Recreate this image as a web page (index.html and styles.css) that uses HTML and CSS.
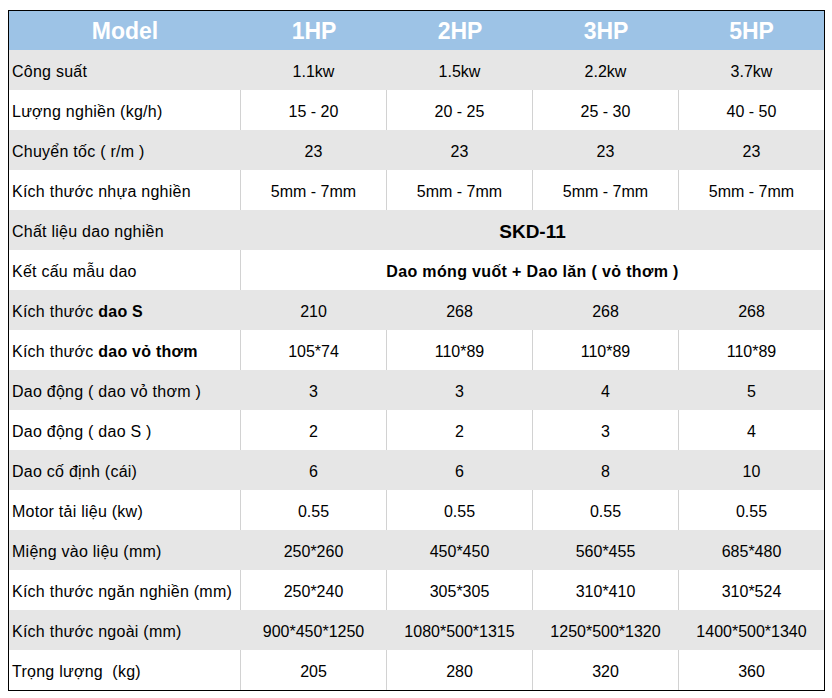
FILE: index.html
```html
<!DOCTYPE html>
<html lang="vi">
<head>
<meta charset="utf-8">
<title>Thông số kỹ thuật</title>
<link rel="stylesheet" href="styles.css">
</head>
<body>
<div class="spec">
  <div class="row head">
    <div class="cell">Model</div><div class="cell">1HP</div><div class="cell">2HP</div><div class="cell">3HP</div><div class="cell">5HP</div>
  </div>
  <div class="row grey">
    <div class="cell label">Công suất</div><div class="cell">1.1kw</div><div class="cell">1.5kw</div><div class="cell">2.2kw</div><div class="cell">3.7kw</div>
  </div>
  <div class="row">
    <div class="cell label">Lượng nghiền (kg/h)</div><div class="cell">15 - 20</div><div class="cell">20 - 25</div><div class="cell">25 - 30</div><div class="cell">40 - 50</div>
  </div>
  <div class="row grey">
    <div class="cell label">Chuyển tốc ( r/m )</div><div class="cell">23</div><div class="cell">23</div><div class="cell">23</div><div class="cell">23</div>
  </div>
  <div class="row">
    <div class="cell label">Kích thước nhựa nghiền</div><div class="cell">5mm - 7mm</div><div class="cell">5mm - 7mm</div><div class="cell">5mm - 7mm</div><div class="cell">5mm - 7mm</div>
  </div>
  <div class="row grey">
    <div class="cell label">Chất liệu dao nghiền</div><div class="cell wide big">SKD-11</div>
  </div>
  <div class="row">
    <div class="cell label">Kết cấu mẫu dao</div><div class="cell wide strong">Dao móng vuốt + Dao lăn ( vỏ thơm )</div>
  </div>
  <div class="row grey">
    <div class="cell label">Kích thước&nbsp;<b>dao S</b></div><div class="cell">210</div><div class="cell">268</div><div class="cell">268</div><div class="cell">268</div>
  </div>
  <div class="row">
    <div class="cell label">Kích thước&nbsp;<b>dao vỏ thơm</b></div><div class="cell">105*74</div><div class="cell">110*89</div><div class="cell">110*89</div><div class="cell">110*89</div>
  </div>
  <div class="row grey">
    <div class="cell label">Dao động ( dao vỏ thơm )</div><div class="cell">3</div><div class="cell">3</div><div class="cell">4</div><div class="cell">5</div>
  </div>
  <div class="row">
    <div class="cell label">Dao động ( dao S )</div><div class="cell">2</div><div class="cell">2</div><div class="cell">3</div><div class="cell">4</div>
  </div>
  <div class="row grey">
    <div class="cell label">Dao cố định (cái)</div><div class="cell">6</div><div class="cell">6</div><div class="cell">8</div><div class="cell">10</div>
  </div>
  <div class="row">
    <div class="cell label">Motor tải liệu (kw)</div><div class="cell">0.55</div><div class="cell">0.55</div><div class="cell">0.55</div><div class="cell">0.55</div>
  </div>
  <div class="row grey">
    <div class="cell label">Miệng vào liệu (mm)</div><div class="cell">250*260</div><div class="cell">450*450</div><div class="cell">560*455</div><div class="cell">685*480</div>
  </div>
  <div class="row">
    <div class="cell label">Kích thước ngăn nghiền (mm)</div><div class="cell">250*240</div><div class="cell">305*305</div><div class="cell">310*410</div><div class="cell">310*524</div>
  </div>
  <div class="row grey">
    <div class="cell label">Kích thước ngoài (mm)</div><div class="cell">900*450*1250</div><div class="cell">1080*500*1315</div><div class="cell">1250*500*1320</div><div class="cell">1400*500*1340</div>
  </div>
  <div class="row">
    <div class="cell label">Trọng lượng &nbsp;(kg)</div><div class="cell">205</div><div class="cell">280</div><div class="cell">320</div><div class="cell">360</div>
  </div>
</div>
</body>
</html>
```

FILE: styles.css
```css
html, body {
  margin: 0;
  padding: 0;
  background: #ffffff;
}

body {
  font-family: "Liberation Sans", Arial, sans-serif;
  font-size: 16px;
  color: #000000;
}

.spec {
  margin: 10px 8px;
  width: 815px;
  border: 1px solid #000000;
}

.row {
  display: grid;
  grid-template-columns: 232px 146px 146px 146px 145px;
  height: 40px;
  background: #ffffff;
}

.row.grey {
  background: #e6e6e6;
}

.cell {
  display: flex;
  align-items: center;
  justify-content: center;
  padding-top: 3px;
  border-right: 1px solid #d2d2d2;
  white-space: nowrap;
  overflow: hidden;
}

.cell:last-child {
  border-right: none;
}

.row.grey .cell {
  border-right-color: transparent;
}

.cell.label {
  justify-content: flex-start;
  padding-left: 3px;
  letter-spacing: 0.25px;
}

.cell.wide {
  grid-column: 2 / 6;
}

.cell.big {
  font-weight: bold;
  font-size: 19px;
}

.cell.strong {
  font-weight: bold;
  font-size: 16px;
  letter-spacing: 0.35px;
}

.row.head {
  height: 39px;
  background: #9dc3e6;
}

.row.head .cell {
  border-right: none;
  color: #ffffff;
  font-weight: bold;
  font-size: 23px;
  padding-top: 1px;
}
```
